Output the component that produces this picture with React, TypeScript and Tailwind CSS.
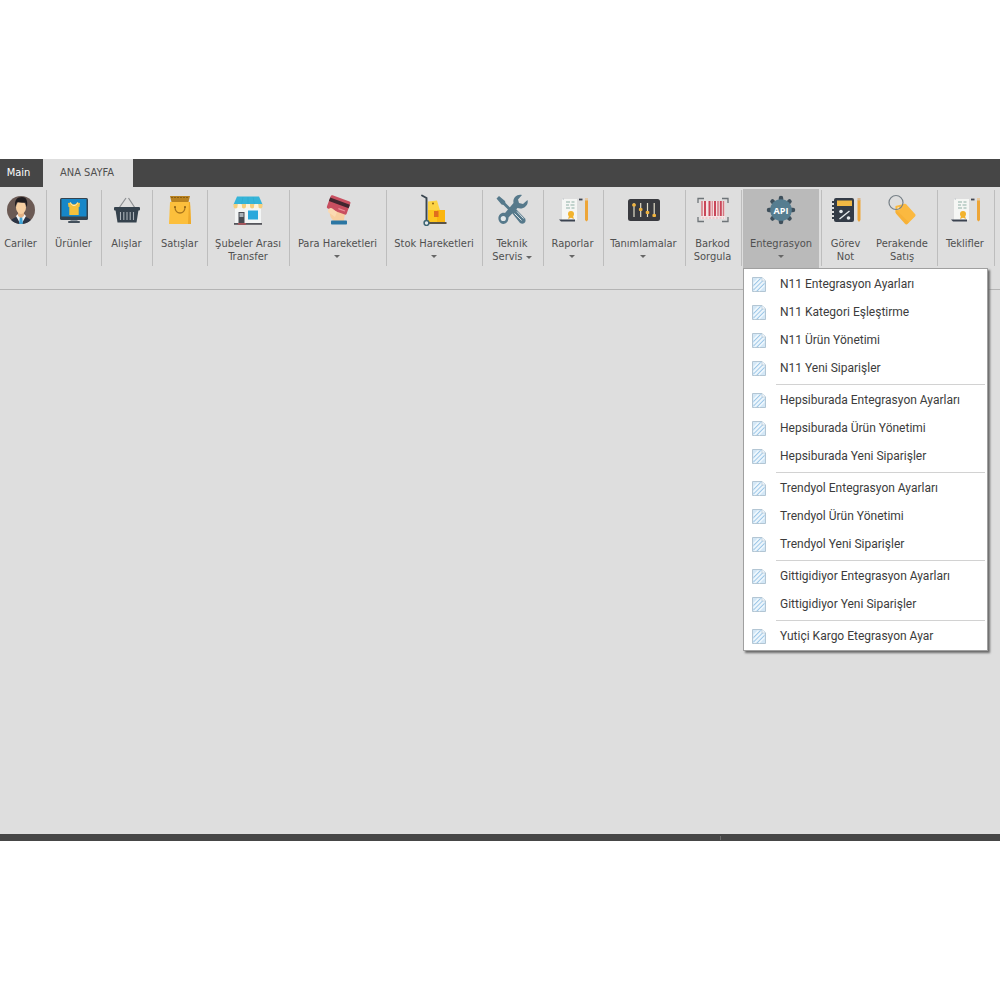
import { ReactNode, useState } from 'react';
import clsx from 'clsx';

function CustomerIcon() {
  return (
    <svg viewBox="0 0 32 32" className="size-8">
      <clipPath id="avatar">
        <circle cx="16" cy="16" r="14" />
      </clipPath>
      <circle cx="16" cy="16" r="14" fill="#6b5a54" />
      <g clipPath="url(#avatar)">
        <path d="M4 32c0-6 4-8 8-9h8c4 1 8 3 8 9z" fill="#2c3444" />
        <path d="M11 22l5 9 5-9-2-2h-6z" fill="#f4f6f8" />
        <path d="M14.8 23h2.4l.8 8h-4z" fill="#3da4d8" />
        <path d="M13 18h6v4l-3 2-3-2z" fill="#e3b184" />
        <ellipse cx="16" cy="13.5" rx="5" ry="6.5" fill="#f6cfa2" />
        <path d="M10.4 13C9 6 12 3 17 3c5 0 6 5 4.800 10-.8-1-.9-3-1.300-4.500-3 .5-6 .3-8.500-.5-.8 1.500-.8 3.500-1.600 5z" fill="#1f1c1f" />
      </g>
    </svg>
  );
}

function ProductIcon() {
  return (
    <svg viewBox="0 0 32 32" className="size-8">
      <path d="M13 25h6l1 3h-8z" fill="#8b959e" />
      <rect x="10" y="27" width="12" height="2" rx="1" fill="#44505c" />
      <rect x="2" y="4" width="28" height="22" rx="1.500" fill="#34434f" />
      <rect x="3.500" y="5" width="25" height="17.500" fill="#1787c8" />
      <path d="M10 9l3-.5c.8 2.500 5.200 2.500 6 0l3 .5-.5 4h-.8V21h-9.400v-8h-.8z" fill="#f3c13c" />
      <path d="M12.500 8.500c.8 4 6.200 4 7 0" fill="none" stroke="#fff0bf" strokeWidth="1" />
    </svg>
  );
}

function BasketIcon() {
  return (
    <svg viewBox="0 0 32 32" className="size-8">
      <path d="M8 14l7-10M24 14L17.500 4" fill="none" stroke="#8c8f92" strokeWidth="1.200" />
      <rect x="3" y="13" width="26" height="3.500" rx="1" fill="#35424d" />
      <path d="M4.500 16h23l-2 12.500h-19z" fill="#35424d" />
      <path d="M9.500 18v8M12.800 18v8M16 18v8M19.200 18v8M22.500 18v8" stroke="#a9b1b7" strokeWidth="1.100" />
    </svg>
  );
}

function SaleBagIcon() {
  return (
    <svg viewBox="0 0 32 32" className="size-8">
      <path d="M6 2h20l-1.500 6h-17z" fill="#b98220" />
      <path d="M7 3.500h18" stroke="#8a5f14" strokeWidth="1" strokeDasharray="2 1" />
      <path d="M6 8h20l1 22H5z" fill="#fcbf3c" />
      <path d="M25 8h1l1 22h-3z" fill="#eda92a" />
      <path d="M11 13c0 8 10 8 10 0" fill="none" stroke="#a9761d" strokeWidth="1.300" />
      <circle cx="11" cy="13" r="1" fill="#8a5f14" />
      <circle cx="21" cy="13" r="1" fill="#8a5f14" />
    </svg>
  );
}

function StoreIcon() {
  return (
    <svg viewBox="0 0 32 32" className="size-8">
      <rect x="3" y="12" width="26" height="17" fill="#f3f5f5" />
      <path d="M5 2.500h22l3.500 8H1.500z" fill="#35b4d8" />
      <path d="M11 3l-1.500 7.500M16 3v7.500M21 3l1.500 7.500" stroke="#2ba8ce" strokeWidth=".6" />
      <path d="M1.500 10h4.200v2.500a2.100 2.100 0 01-4.200 0zM9.800 10H14v2.500a2.100 2.100 0 01-4.200 0zM18 10h4.200v2.500a2.100 2.100 0 01-4.200 0zM26.300 10h4.200v2.500a2.100 2.100 0 01-4.200 0z" fill="#f5cf7c" />
      <path d="M5.700 10h4.100v2.500a2 2 0 01-4.100 0zM14 10h4v2.500a2 2 0 01-4 0zM22.200 10h4.100v2.500a2 2 0 01-4.100 0z" fill="#fff3d9" />
      <rect x="6.500" y="18" width="6" height="11" fill="#474b52" />
      <rect x="7.500" y="19" width="4" height="4" fill="#a9b0b6" />
      <rect x="16" y="16.500" width="10" height="9" fill="#2aa8dc" />
      <path d="M2 29h28v1.800H2z" fill="#55565c" />
      <path d="M6 29h8v1.800H6z" fill="#a8545a" />
    </svg>
  );
}

function PaymentIcon() {
  return (
    <svg viewBox="0 0 32 32" className="size-8">
      <path d="M8 16c-1 7 2 9 4 11h10c0-4 2-6 0-11z" fill="#f8cfa0" />
      <g transform="rotate(20 17 10)">
        <rect x="6.500" y="4" width="21" height="14" rx="1.500" fill="#c84f60" />
        <rect x="6.500" y="7" width="21" height="3.600" fill="#40262f" />
        <path d="M18 14.500h7" stroke="#ec8d97" strokeWidth="1.200" />
      </g>
      <path d="M6 18c0-4 3-5 5-3l4 3-2 5z" fill="#fbdab2" />
      <rect x="9" y="26.500" width="16" height="4" rx=".8" fill="#2b76a3" />
    </svg>
  );
}

function StockIcon() {
  return (
    <svg viewBox="0 0 32 32" className="size-8">
      <path d="M10 7.500l9-1 3 10H10z" fill="#fcd446" />
      <circle cx="15" cy="9.500" r="1" fill="#8e6414" />
      <rect x="10" y="16" width="17" height="12" fill="#fdc51e" />
      <path d="M19 16h8v12h-8z" fill="#fbb60f" />
      <rect x="16" y="17" width="4.500" height="6" fill="#e06d1e" />
      <path d="M4 1.500l4.500 2.500V28" fill="none" stroke="#3a4650" strokeWidth="1.900" strokeLinecap="round" />
      <path d="M9 29h19.500" stroke="#4b4436" strokeWidth="1.800" />
      <circle cx="8.500" cy="29" r="2.400" fill="#e5eaec" stroke="#3c6471" strokeWidth="1.500" />
    </svg>
  );
}

function ServiceIcon() {
  return (
    <svg viewBox="0 0 32 32" className="size-8">
      <path d="M.5 4.500L3 2l6 5 .5 2 6 6-2 2-6-6-2-.5z" fill="#56798b" />
      <path d="M16 19l4-4 9 9.500c2 3.500-1.500 6.500-5 4.500z" fill="#56798b" />
      <path d="M18.500 19.500l7 7M21 17.500l6.500 7" stroke="#dde4e7" strokeWidth="1" />
      <path d="M31.500 6L27 10l-4-1-1-3.500L26 1c-5-1.500-9.500 3-8.500 8L9 19c-5-1-8 4-6 8 2.500 5 9.500 3.500 9.500-3.500L21.500 14C27 16 33 11.500 31.500 6z" fill="#56798b" />
      <circle cx="7.300" cy="24.500" r="2.600" fill="#e3e8ea" />
    </svg>
  );
}

function ReportIcon() {
  return (
    <svg viewBox="0 0 32 32" className="size-8">
      <path d="M5 5h15v21H5z" fill="#f5f6f4" />
      <path d="M5 5l2-1v2z" fill="#c9cdd0" />
      <path d="M9 8h4M14.500 8h3M9 11h3M13.500 11h4M9 14h4M14.500 14h3" stroke="#8fb0a6" strokeWidth="1" />
      <circle cx="14" cy="20" r="3" fill="#f2b32d" />
      <path d="M12 22l-1 3 3-1.300 3 1.300-1-3z" fill="#f2b32d" />
      <path d="M2 25.500h16v2H4z" fill="#3b4350" />
      <path d="M22 5.500h3.500" stroke="#414651" strokeWidth="1.800" />
      <path d="M28 6h3v20l-1.500 1.500L28 26z" fill="#eda537" />
      <path d="M28 4h3v2.500h-3z" fill="#e7c9a2" />
    </svg>
  );
}

function SettingsIcon() {
  return (
    <svg viewBox="0 0 34 32" className="h-8 w-[34px]">
      <rect x="1" y="5" width="32" height="22" rx="2.500" fill="#393a3f" />
      <path d="M7 9v14M13.700 9v14M20.500 9v14M27.200 9v14" stroke="#e2dcc8" strokeWidth="1.200" />
      <g fill="#f0b33e">
        <rect x="5.200" y="9.500" width="3.600" height="3" rx="1" />
        <rect x="11.900" y="14" width="3.600" height="3" rx="1" />
        <rect x="18.700" y="17" width="3.600" height="3" rx="1" />
        <rect x="25.400" y="20" width="3.600" height="3" rx="1" />
      </g>
    </svg>
  );
}

function BarcodeIcon() {
  return (
    <svg viewBox="0 0 32 32" className="size-8">
      <path d="M1 9V4.500h6M25 4.500h6V9M31 23v4.500h-6M7 27.500H1V23" fill="none" stroke="#6e7478" strokeWidth="1.300" />
      <rect x="4" y="7" width="24" height="18" fill="#f3e4e5" />
      <path d="M5 7v15M21 7v15M26.500 7v15" stroke="#d2757f" strokeWidth="1.500" />
      <path d="M8 7v15M12.500 7v15M18 7v15M23.800 7v15" stroke="#c94759" strokeWidth="2" />
      <path d="M15.200 7v15" stroke="#d2757f" strokeWidth="1" />
      <path d="M5 24h22" stroke="#e3b3b8" strokeWidth="1.200" strokeDasharray="2 1.500" />
    </svg>
  );
}

function ApiIcon() {
  return (
    <svg viewBox="0 0 32 32" className="size-8">
      <path d="M16 4v24M4 16h24M7.500 7.500l17 17M24.500 7.500l-17 17" stroke="#3f505c" strokeWidth="4.500" strokeLinecap="round" />
      <circle cx="16" cy="16" r="10.800" fill="#567d90" />
      <text x="16" y="19.500" textAnchor="middle" fill="#ffffff" className="font-['Open_Sans',sans-serif] text-[9px] font-bold">API</text>
    </svg>
  );
}

function TaskIcon() {
  return (
    <svg viewBox="0 0 32 32" className="size-8">
      <rect x="4" y="4" width="20" height="24" rx="2" fill="#333b46" />
      <path d="M2 8h4M2 12h4M2 16h4M2 20h4M2 24h4" stroke="#333b46" strokeWidth="1.800" />
      <rect x="7" y="6.500" width="15" height="5.500" fill="#f0b844" />
      <path d="M9.500 25l10-8" stroke="#e6eaec" strokeWidth="1.500" />
      <circle cx="11" cy="17.500" r="1.800" fill="#e6eaec" />
      <circle cx="18.500" cy="24" r="1.800" fill="#e6eaec" />
      <path d="M27.500 6h3v20L29 28l-1.500-2z" fill="#eda537" />
      <path d="M27.500 4h3v2.500h-3z" fill="#d9b58c" />
    </svg>
  );
}

function TagIcon() {
  return (
    <svg viewBox="0 0 32 32" className="size-8">
      <path d="M9.500 12l9-2.200c1 0 1.500.2 2 .8L29 20c.7.8.7 1.700 0 2.500l-7.500 7.500c-.8.700-1.700.6-2.400-.2L10 19.500c-.5-.6-.7-1-.7-1.600z" fill="#fbb940" />
      <path d="M10 19.500l9 10.300c.8.700 1.700.7 2.400 0l1.500-1.500L10 16z" fill="#f3a92d" opacity=".5" />
      <circle cx="12.500" cy="14.500" r="1.300" fill="#fdf0d0" />
      <circle cx="10" cy="8.500" r="7" fill="none" stroke="#778087" strokeWidth="1.200" />
    </svg>
  );
}

function PageIcon() {
  return (
    <svg viewBox="0 0 14 16" className="h-4 w-3.5 shrink-0">
      <path d="M.5 1.500h9.500l3.500 3.500v10.500H.5z" fill="#d3e7f6" stroke="#b3c6d4" />
      <path d="M1.500 7.500l5-5M1.500 12l8.500-8.500M2.500 15L12.500 5M7 15l5.500-5.500" stroke="#f3f9fd" strokeWidth="1.100" />
      <path d="M1.500 9.500l7-7M1.500 14L12 3.500M5 15l7.500-7.500" stroke="#9fc8e8" strokeWidth="1" />
      <path d="M10 1.500V5h3.500" fill="#f4f9fd" stroke="#b3c6d4" strokeWidth=".7" />
    </svg>
  );
}

function Caret() {
  return <span className="inline-block border-x-[3px] border-t-[3px] border-x-transparent border-t-[#666666] align-middle" />;
}

interface RibbonItem {
  lines: string[];
  icon: ReactNode;
  caret?: 'below' | 'inline';
  width?: string;
  menu?: boolean;
}

interface RibbonGroup {
  width: string;
  items: RibbonItem[];
}

const groups: RibbonGroup[] = [
  { width: 'w-[46px] pr-[5px]', items: [{ lines: ['Cariler'], icon: <CustomerIcon /> }] },
  { width: 'w-[54px] pr-px', items: [{ lines: ['Ürünler'], icon: <ProductIcon /> }] },
  { width: 'w-[50px] pr-px', items: [{ lines: ['Alışlar'], icon: <BasketIcon /> }] },
  { width: 'w-[54px] pr-px', items: [{ lines: ['Satışlar'], icon: <SaleBagIcon /> }] },
  { width: 'w-[81px] pr-px', items: [{ lines: ['Şubeler Arası', 'Transfer'], icon: <StoreIcon /> }] },
  { width: 'w-[96px] pr-px', items: [{ lines: ['Para Hareketleri'], icon: <PaymentIcon />, caret: 'below' }] },
  { width: 'w-[95px] pr-px', items: [{ lines: ['Stok Hareketleri'], icon: <StockIcon />, caret: 'below' }] },
  { width: 'w-[60px] pr-[2px]', items: [{ lines: ['Teknik', 'Servis'], icon: <ServiceIcon />, caret: 'inline' }] },
  { width: 'w-[59px] pr-[2px]', items: [{ lines: ['Raporlar'], icon: <ReportIcon />, caret: 'below' }] },
  { width: 'w-[81px] pr-[2px]', items: [{ lines: ['Tanımlamalar'], icon: <SettingsIcon />, caret: 'below' }] },
  { width: 'w-[55px] pr-[2px]', items: [{ lines: ['Barkod', 'Sorgula'], icon: <BarcodeIcon /> }] },
  { width: 'w-[79px] pr-[2px] pl-px', items: [{ lines: ['Entegrasyon'], icon: <ApiIcon />, caret: 'below', menu: true }] },
  {
    width: 'w-[115px] pr-[2px]',
    items: [
      { lines: ['Görev', 'Not'], icon: <TaskIcon />, width: 'w-[47px]' },
      { lines: ['Perakende', 'Satış'], icon: <TagIcon /> },
    ],
  },
  { width: 'w-[56px] pr-[2px]', items: [{ lines: ['Teklifler'], icon: <ReportIcon /> }] },
];

const menuSections = [
  ['N11 Entegrasyon Ayarları', 'N11 Kategori Eşleştirme', 'N11 Ürün Yönetimi', 'N11 Yeni Siparişler'],
  ['Hepsiburada Entegrasyon Ayarları', 'Hepsiburada Ürün Yönetimi', 'Hepsiburada Yeni Siparişler'],
  ['Trendyol Entegrasyon Ayarları', 'Trendyol Ürün Yönetimi', 'Trendyol Yeni Siparişler'],
  ['Gittigidiyor Entegrasyon Ayarları', 'Gittigidiyor Yeni Siparişler'],
  ['Yutiçi Kargo Etegrasyon Ayar'],
];

function IntegrationMenu() {
  return (
    <div
      role="menu"
      className="absolute top-full left-0 z-10 w-[245px] border border-[#a0a0a0] bg-white pt-px font-['Roboto','Open_Sans',sans-serif] text-[12px] text-[#3c3c3c] shadow-[2px_2px_2px_#6b6b6b]"
    >
      {menuSections.map((section, index) => (
        <div key={section[0]}>
          {index > 0 && <div className="mr-[2px] ml-8 flex h-1 items-center"><div className="h-px w-full bg-[#d2d2d2]" /></div>}
          {section.map((label) => (
            <button key={label} role="menuitem" className="flex h-7 w-full items-center gap-3.5 pl-2 text-left whitespace-nowrap hover:bg-[#e5e5e5]">
              <PageIcon />
              {label}
            </button>
          ))}
        </div>
      ))}
    </div>
  );
}

function RibbonButton({ item, open, onToggle }: { item: RibbonItem; open: boolean; onToggle: () => void }) {
  return (
    <div className={clsx('relative', item.width ?? 'flex-1')}>
      <button
        aria-haspopup={item.menu ? 'menu' : undefined}
        aria-expanded={item.menu ? open : undefined}
        onClick={item.menu ? onToggle : undefined}
        className={clsx('flex h-[79px] w-full flex-col items-center pt-[5px]', open && 'bg-[#bababa]')}
      >
        {item.icon}
        <span className="mt-[11px] flex flex-col items-center leading-[13px] whitespace-nowrap">
          {item.lines.map((line, index) => (
            <span key={line}>
              {line}
              {item.caret === 'inline' && index === item.lines.length - 1 && <> <Caret /></>}
            </span>
          ))}
          {item.caret === 'below' && <span className="flex h-[13px] items-center"><Caret /></span>}
        </span>
      </button>
      {open && <IntegrationMenu />}
    </div>
  );
}

export default function App() {
  const [menuOpen, setMenuOpen] = useState(true);

  return (
    <div className="flex min-h-screen flex-col bg-white py-[159px] font-['DejaVu_Sans_Condensed','DejaVu_Sans',sans-serif] text-[11px] text-[#505050]">
      <nav className="flex h-7 bg-[#464646]">
        <button className="w-[43px] pr-1.5 text-center text-white">Main</button>
        <button className="w-[90px] bg-[#dedede] pr-0.5">ANA SAYFA</button>
      </nav>

      <header className="flex h-[103px] items-start border-b border-[#b4b4b4] bg-[#dedede] pt-[2px]">
        {groups.map((group) => (
          <div key={group.items[0].lines[0]} className="flex shrink-0">
            <div className={clsx('flex', group.width)}>
              {group.items.map((item) => (
                <RibbonButton
                  key={item.lines[0]}
                  item={item}
                  open={!!item.menu && menuOpen}
                  onToggle={() => setMenuOpen(!menuOpen)}
                />
              ))}
            </div>
            <span className="mt-px h-[76px] w-px bg-[#bdbdbd]" />
          </div>
        ))}
      </header>

      <main className="flex-1 bg-[#dedede]" />

      <footer className="flex h-[7px] items-center bg-[#464646] pl-[72%]">
        <span className="h-1 w-px bg-[#6a6a6a]" />
      </footer>
    </div>
  );
}
